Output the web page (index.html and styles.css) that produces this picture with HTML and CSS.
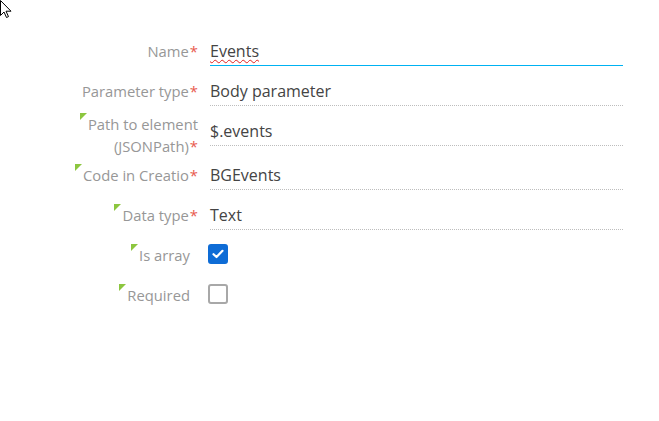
FILE: index.html
```html
<!DOCTYPE html>
<html>
<head>
<meta charset="utf-8">
<link rel="stylesheet" href="styles.css">
</head>
<body>
<svg class="cursor" width="12" height="19" viewBox="0 0 12 19"><path d="M0.5 0.5 L0.5 15.5 L4 12 L6.5 17.5 L8.5 16.6 L6 11.2 L11 11.2 Z" fill="#fff" stroke="#000" stroke-width="1"/></svg>
<div class="form">
  <div class="row">
    <div class="label"><span class="text">Name<i class="req">*</i></span></div>
    <div class="value active"><span class="spell">Events</span></div>
  </div>
  <div class="row">
    <div class="label"><span class="text">Parameter type<i class="req">*</i></span></div>
    <div class="value">Body parameter</div>
  </div>
  <div class="row">
    <div class="label multi"><span class="text hint">Path to element (JSONPath)<i class="req">*</i></span></div>
    <div class="value">$.events</div>
  </div>
  <div class="row tall">
    <div class="label"><span class="text hint">Code in Creatio<i class="req">*</i></span></div>
    <div class="value">BGEvents</div>
  </div>
  <div class="row">
    <div class="label"><span class="text hint">Data type<i class="req">*</i></span></div>
    <div class="value">Text</div>
  </div>
  <div class="row">
    <div class="label optional"><span class="text hint">Is array</span></div>
    <div class="value check"><span class="box on"><svg width="12" height="10" viewBox="0 0 12 10"><path d="M1.5 5.2 L4.5 8 L10.5 1.8" fill="none" stroke="#fff" stroke-width="2.2" stroke-linecap="round" stroke-linejoin="round"/></svg></span></div>
  </div>
  <div class="row">
    <div class="label optional"><span class="text hint">Required</span></div>
    <div class="value check"><span class="box"></span></div>
  </div>
</div>
</body>
</html>
```
FILE: styles.css
```css
html, body {
  margin: 0;
  background: #fff;
}
body {
  font-family: "Open Sans", "Noto Sans", sans-serif;
  position: relative;
  width: 659px;
  height: 421px;
  overflow: hidden;
}
.cursor {
  position: absolute;
  left: 0;
  top: 0;
}
.form {
  padding-top: 26px;
  padding-left: 70px;
}
.row {
  display: flex;
  height: 40px;
}
.row.tall {
  height: 44px;
}
.label {
  width: 128px;
  margin-right: 12px;
  text-align: right;
  color: #979797;
  font-size: 14.8px;
  line-height: 22px;
  align-self: flex-end;
  padding-bottom: 4px;
}
.label.optional {
  box-sizing: border-box;
  padding-right: 8px;
}
.label.multi {
  align-self: flex-start;
  padding-top: 7px;
  padding-bottom: 0;
}
.text {
  position: relative;
}
.hint::before {
  content: "";
  position: absolute;
  left: -8px;
  top: -1px;
  width: 0;
  height: 0;
  border-top: 7px solid #8cc63f;
  border-right: 7px solid transparent;
}
.req {
  font-style: normal;
  color: #e8594e;
  margin-left: 1px;
}
.value {
  width: 413px;
  display: flex;
  align-items: flex-end;
  padding-bottom: 3px;
  box-sizing: border-box;
  border-bottom: 1px dotted #bdbdbd;
  color: #444;
  font-size: 16px;
  line-height: 22px;
}
.value.active {
  border-bottom: 1px solid #00b2f2;
}
.spell {
  text-decoration: underline wavy #e02020;
  text-decoration-thickness: 1px;
  text-underline-offset: 2px;
}
.value.check {
  border-bottom: none;
  align-items: center;
  padding-bottom: 0;
  padding-top: 8px;
  margin-left: -2px;
}
.box {
  width: 20px;
  height: 20px;
  box-sizing: border-box;
  border: 2px solid #a8a8a8;
  border-radius: 3px;
  display: flex;
  align-items: center;
  justify-content: center;
}
.box.on {
  background: #0e6cd6;
  border-color: #0e6cd6;
}
```
